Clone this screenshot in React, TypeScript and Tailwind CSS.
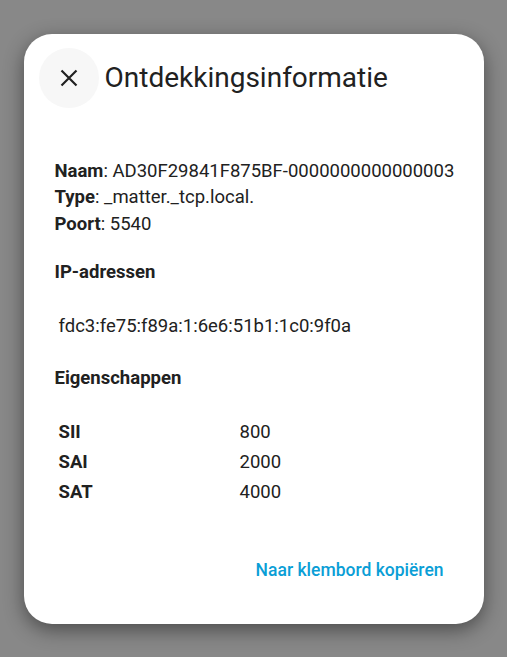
import React from 'react';

const rows: [string, string][] = [
  ['SII', '800'],
  ['SAI', '2000'],
  ['SAT', '4000'],
];

const CloseIcon: React.FC = () => (
  <svg width="18" height="18" viewBox="0 0 18 18" fill="none" stroke="#212121" strokeWidth="2.2" strokeLinecap="butt">
    <path d="M1.5 1.5 16.5 16.5M16.5 1.5 1.5 16.5" />
  </svg>
);

const App: React.FC = () => {
  return (
    <div
      className="flex h-screen w-full items-center justify-center bg-[#888888]"
      style={{ fontFamily: 'Roboto, "Noto Sans", sans-serif' }}
    >
      <div className="flex h-[590px] w-[460px] flex-col rounded-[28px] bg-white text-[#212121] shadow-[0_6px_20px_rgba(0,0,0,0.45)]">
        {/* Header */}
        <div className="flex items-center gap-[6px] px-[15px] pt-[14px]">
          <button className="flex h-[60px] w-[60px] items-center justify-center rounded-full bg-[#f7f7f7]">
            <CloseIcon />
          </button>
          <h2 className="text-[28px] font-normal leading-none">Ontdekkingsinformatie</h2>
        </div>

        {/* Content */}
        <div className="flex-1 pl-[31px] pr-[20px] text-[18.5px] leading-[26.5px]">
          <div className="mt-[50px]">
            <div className="whitespace-nowrap">
              <b className="font-bold">Naam</b>: AD30F29841F875BF-0000000000000003
            </div>
            <div>
              <b className="font-bold">Type</b>: _matter._tcp.local.
            </div>
            <div>
              <b className="font-bold">Poort</b>: 5540
            </div>
          </div>

          <h4 className="mt-[22px] font-bold">IP-adressen</h4>
          <div className="mt-[27px] pl-[4px]">fdc3:fe75:f89a:1:6e6:51b1:1c0:9f0a</div>

          <h4 className="mt-[26px] font-bold">Eigenschappen</h4>
          <table className="mt-[26px] ml-[4px] border-collapse">
            <tbody>
              {rows.map(([k, v]) => (
                <tr key={k} className="h-[30px]">
                  <td className="w-[181px] p-0 font-bold">{k}</td>
                  <td className="p-0">{v}</td>
                </tr>
              ))}
            </tbody>
          </table>
        </div>

        {/* Actions */}
        <div className="flex justify-end px-[28px] pb-[30px]">
          <button className="rounded-full px-[12px] py-[10px] text-[17.5px] font-medium text-[#0a9ed6]">
            Naar klembord kopiëren
          </button>
        </div>
      </div>
    </div>
  );
};

export default App;
